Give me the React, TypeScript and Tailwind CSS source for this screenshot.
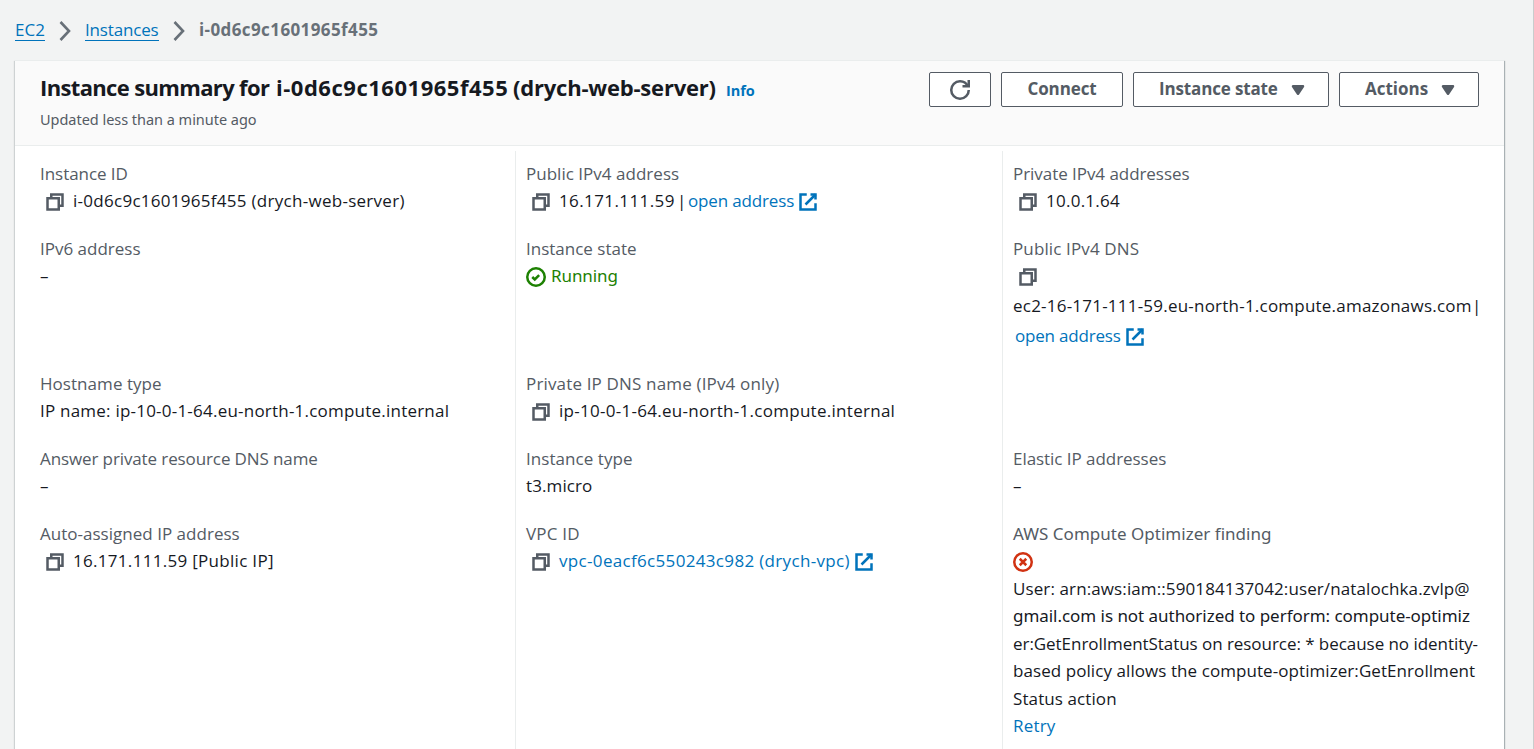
import type { ReactNode } from 'react';

const SANS = "font-['Open_Sans','Noto_Sans',sans-serif]";
const NOTO = "font-['Noto_Sans','Open_Sans',sans-serif]";

function CopyIcon() {
  return (
    <svg viewBox="0 0 16 16" className="ml-[5px] mr-[8px] mt-[2px] h-5 w-5 shrink-0 fill-none stroke-[#545b64] stroke-2">
      <path d="M2 5h9v9H2z" />
      <path d="M5 5V2h9v9h-3" />
    </svg>
  );
}

function ExternalIcon() {
  return (
    <svg viewBox="0 0 16 16" className="ml-[3px] mt-[2px] h-5 w-5 shrink-0 fill-none stroke-[#0073bb] stroke-2">
      <path d="M10 2h4v4" />
      <path d="m6 10 8-8" />
      <path d="M14 9.048V14H2V2h5" />
    </svg>
  );
}

function SuccessIcon() {
  return (
    <svg viewBox="0 0 16 16" className="mr-[5px] mt-[2px] h-5 w-5 shrink-0 fill-none stroke-[#1d8102] stroke-2">
      <circle cx="8" cy="8" r="7" />
      <path d="m5 8 2 2 3.521-3.521" />
    </svg>
  );
}

function ErrorIcon() {
  return (
    <svg viewBox="0 0 16 16" className="mt-[2px] h-5 w-5 shrink-0 fill-none stroke-[#d13212] stroke-2">
      <circle cx="8" cy="8" r="7" />
      <path d="m10.6 5.4-5.2 5.2M10.6 10.6 5.4 5.4" />
    </svg>
  );
}

function RefreshIcon() {
  return (
    <svg viewBox="0 0 16 16" className="h-5 w-5 fill-none stroke-[#545b64] stroke-2">
      <path d="M10 5h5V0" />
      <path d="M15 8a6.957 6.957 0 0 1-7 7 6.957 6.957 0 0 1-7-7 6.957 6.957 0 0 1 7-7 6.87 6.87 0 0 1 6.3 4" />
    </svg>
  );
}

function CaretIcon() {
  return (
    <svg viewBox="0 0 16 16" className="h-5 w-5 fill-[#545b64] stroke-[#545b64] stroke-2" strokeLinejoin="round">
      <path d="M4 5h8l-4 6-4-6z" />
    </svg>
  );
}

function Chevron() {
  return (
    <svg viewBox="0 0 12 20" className="h-5 w-3 fill-none stroke-[#687078]" strokeWidth="2.6">
      <path d="M1.5 1 10 10 1.5 19" />
    </svg>
  );
}

function Button({ className, children }: { className: string; children: ReactNode }) {
  return (
    <button className={`flex h-[35px] items-center rounded-[2px] border border-[#545b64] bg-white text-[17px] font-bold text-[#545b64] ${className}`}>
      {children}
    </button>
  );
}

function Field({ label, track = '', font = '', tall = false, children }: { label: string; track?: string; font?: string; tall?: boolean; children: ReactNode }) {
  return (
    <div className={tall ? 'h-[135px]' : 'h-[75px]'}>
      <div className={`h-[27.25px] text-[#545b64] ${track} ${font}`}>{label}</div>
      {children}
    </div>
  );
}

function Line({ className = '', children }: { className?: string; children: ReactNode }) {
  return <div className={`flex h-[27.5px] items-center ${className}`}>{children}</div>;
}

export default function App() {
  return (
    <div className={`h-[749px] w-[1534px] overflow-hidden border-r border-[#c9cdcd] bg-[#f2f3f3] text-[17px] leading-[27.5px] text-[#16191f] ${SANS}`}>
      <nav className="flex h-[60px] items-center pl-[15px] text-[#0073bb]">
        <a className="w-[30px] border-b border-[#0073bb] leading-[21px]">EC2</a>
        <span className="ml-[14px] mr-[14px] mt-[2px]"><Chevron /></span>
        <a className="w-[74px] border-b border-[#0073bb] leading-[21px] tracking-[-0.17px]">Instances</a>
        <span className="ml-[14px] mr-[14px] mt-[2px]"><Chevron /></span>
        <span className="font-bold tracking-[0.4px] text-[#687078]">i-0d6c9c1601965f455</span>
      </nav>

      <section className="ml-[15px] h-[760px] w-[1489px] border-t border-[#eaeded] bg-white shadow-[1px_1px_1px_0_rgba(0,28,36,0.3),-1px_1px_1px_0_rgba(0,28,36,0.15)]">
        <header className="flex h-[85px] justify-between border-b border-[#eaeded] bg-[#fafafa] pl-[25px] pr-[25px] pt-[11px]">
          <div className="-mt-px">
            <h1 className="flex h-[33px] items-baseline whitespace-pre text-[22px] font-bold leading-[33px]">
              <span className="w-[236px] tracking-[-0.65px]">Instance summary for </span>
              <span className="w-[237px] tracking-[0.52px]">i-0d6c9c1601965f455 </span>
              <span className="w-[203px] tracking-[-0.2px]">(drych-web-server)</span>
              <a className="ml-[10px] text-[14.5px] tracking-[-0.1px] text-[#0073bb]">Info</a>
            </h1>
            <p className={`text-[14.5px] leading-[30px] tracking-[-0.03px] text-[#545b64] ${NOTO}`}>Updated less than a minute ago</p>
          </div>
          <div className="flex gap-[10px]">
            <Button className="w-[62px] justify-center"><RefreshIcon /></Button>
            <Button className="w-[122px] justify-center tracking-[-0.1px]"><span className="-mt-px">Connect</span></Button>
            <Button className="w-[196px] justify-between pl-[25px] pr-[20px] tracking-[-0.15px]"><span className="-mt-px">Instance state</span><CaretIcon /></Button>
            <Button className="w-[140px] justify-between pl-[25px] pr-[20px]"><span className="-mt-px">Actions</span><CaretIcon /></Button>
          </div>
        </header>

        <div className="flex h-[674px] pt-[5px]">
          <div className="w-[500px] pl-[25px] pt-[9px]">
            <Field label="Instance ID" track="tracking-[-0.05px]">
              <Line className="tracking-[0.28px]"><CopyIcon />i-0d6c9c1601965f455 (drych-web-server)</Line>
            </Field>
            <Field label="IPv6 address" tall>
              <Line>–</Line>
            </Field>
            <Field label="Hostname type" track="tracking-[0.05px]">
              <Line className="tracking-[0.22px]">IP name: ip-10-0-1-64.eu-north-1.compute.internal</Line>
            </Field>
            <Field label="Answer private resource DNS name" track="tracking-[-0.11px]">
              <Line>–</Line>
            </Field>
            <Field label="Auto-assigned IP address" track="tracking-[0.02px]">
              <Line className="tracking-[0.3px]"><CopyIcon />16.171.111.59 [Public IP]</Line>
            </Field>
          </div>

          <div className="w-[487px] border-l border-[#eaeded] pl-[10px] pt-[9px]">
            <Field label="Public IPv4 address" track="tracking-[0.02px]">
              <Line>
                <CopyIcon />
                <span className="w-[118px] tracking-[0.4px]">16.171.111.59</span>
                <span className="w-[11px]">|</span>
                <a className="w-[107px] whitespace-nowrap tracking-[-0.15px] text-[#0073bb]">open address</a>
                <ExternalIcon />
              </Line>
            </Field>
            <Field label="Instance state" tall>
              <Line className={`tracking-[-0.1px] text-[#1d8102] ${NOTO}`}><SuccessIcon />Running</Line>
            </Field>
            <Field label="Private IP DNS name (IPv4 only)" track="tracking-[0.16px]">
              <Line className="tracking-[0.28px]"><CopyIcon />ip-10-0-1-64.eu-north-1.compute.internal</Line>
            </Field>
            <Field label="Instance type" track="tracking-[0.06px]">
              <Line className="tracking-[0.1px]">t3.micro</Line>
            </Field>
            <Field label="VPC ID" track="tracking-[0.2px]">
              <Line className="text-[#0073bb]">
                <CopyIcon />
                <a className="w-[292px] whitespace-nowrap tracking-[0.33px]">vpc-0eacf6c550243c982 (drych-vpc)</a>
                <ExternalIcon />
              </Line>
            </Field>
          </div>

          <div className="flex-1 border-l border-[#eaeded] pl-[10px] pt-[9px]">
            <Field label="Private IPv4 addresses" track="tracking-[-0.05px]">
              <Line className="tracking-[0.25px]"><CopyIcon />10.0.1.64</Line>
            </Field>
            <Field label="Public IPv4 DNS" track="tracking-[0.13px]" tall>
              <Line><CopyIcon /></Line>
              <div className="mt-px flex h-[30px] items-center whitespace-nowrap tracking-[0.22px]">
                <span className="w-[459px]">ec2-16-171-111-59.eu-north-1.compute.amazonaws.com</span>|
              </div>
              <div className="flex h-[30px] items-center pl-[2px]">
                <a className="w-[107px] whitespace-nowrap tracking-[-0.2px] text-[#0073bb]">open address</a>
                <ExternalIcon />
              </div>
            </Field>
            <div className="h-[75px]" />
            <Field label="Elastic IP addresses" track="tracking-[-0.05px]">
              <Line>–</Line>
            </Field>
            <Field label="AWS Compute Optimizer finding" track="tracking-[0.02px]" font={NOTO}>
              <Line><ErrorIcon /></Line>
              <div className="whitespace-nowrap">
                <Line className="tracking-[0.11px]">User: arn:aws:iam::590184137042:user/natalochka.zvlp@</Line>
                <Line className={`tracking-[-0.04px] ${NOTO}`}>gmail.com is not authorized to perform: compute-optimiz</Line>
                <Line className="tracking-[-0.05px]">er:GetEnrollmentStatus on resource: * because no identity-</Line>
                <Line className="tracking-[0.07px]">based policy allows the compute-optimizer:GetEnrollment</Line>
                <Line className="tracking-[0.1px]">Status action</Line>
                <Line className="tracking-[0.2px] text-[#0073bb]">Retry</Line>
              </div>
            </Field>
          </div>
        </div>
      </section>
    </div>
  );
}
